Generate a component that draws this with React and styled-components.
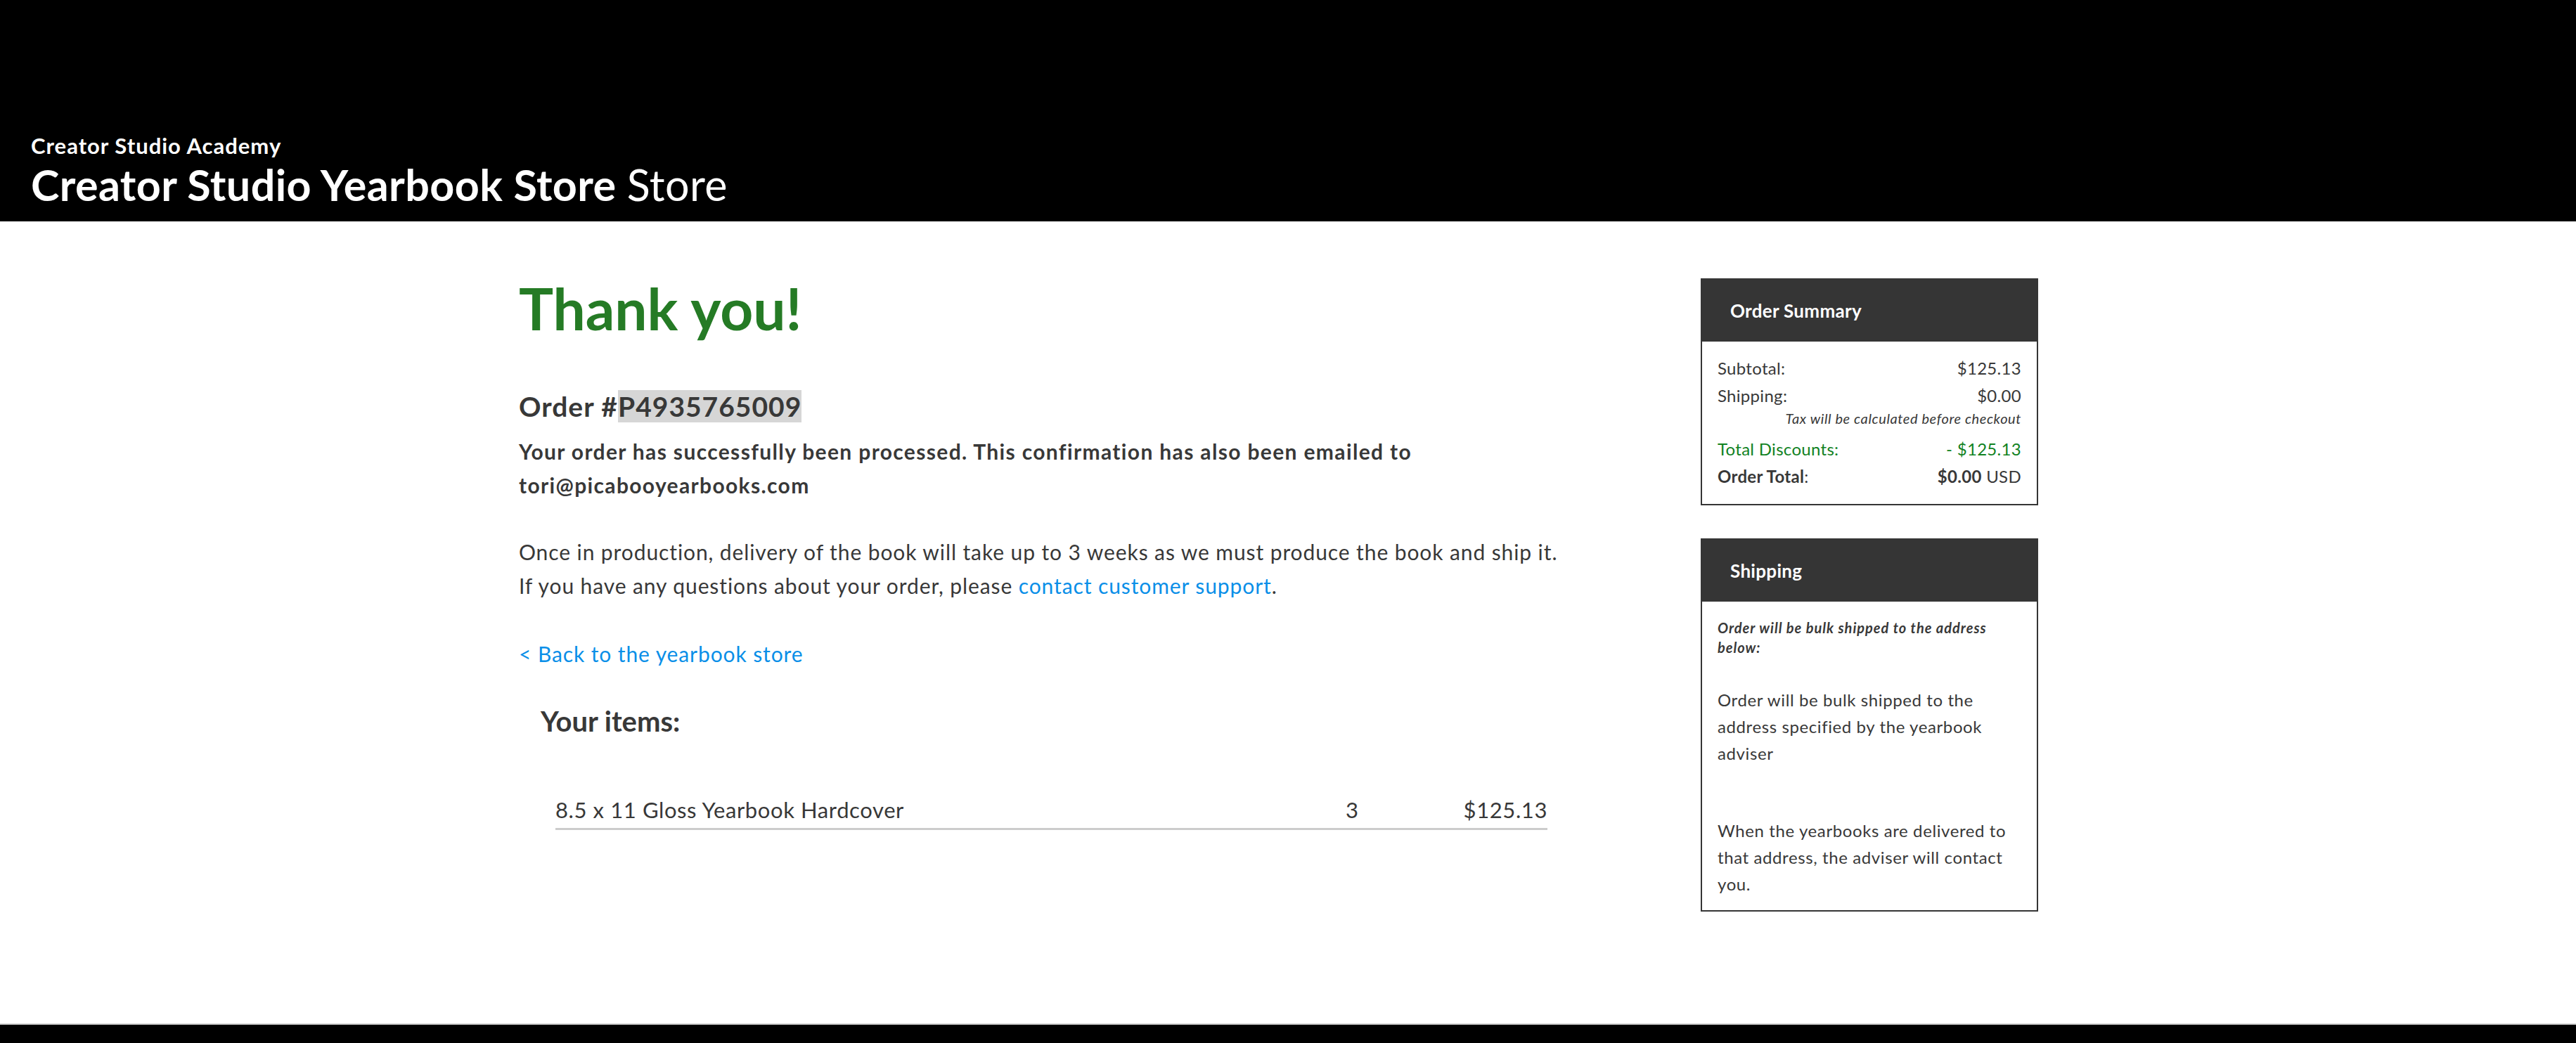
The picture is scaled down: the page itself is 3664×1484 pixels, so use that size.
import React from 'react'
import styled, {createGlobalStyle} from 'styled-components'

const GlobalStyle = createGlobalStyle`
  html, body {
    margin: 0;
    padding: 0;
    background: #ffffff;
    font-family: Lato, "Open Sans", sans-serif;
    color: #383838;
  }
`

const Page = styled.div`
  display: flex;
  flex-direction: column;
  min-height: 1484px;
`

const Header = styled.header`
  background: #000000;
  height: 315px;
  box-sizing: border-box;
  padding: 0 0 15px 44px;
  display: flex;
  flex-direction: column;
  justify-content: flex-end;
  color: #ffffff;
`

const SchoolName = styled.div`
  font-size: 31px;
  font-weight: 700;
  line-height: 38px;
  letter-spacing: 1px;
`

const StoreName = styled.h1`
  margin: 0;
  font-size: 61px;
  line-height: 74px;
  font-weight: 700;
  letter-spacing: 0.4px;
  span {
    font-weight: 400;
  }
`

const Body = styled.main`
  flex: 1;
  display: flex;
  justify-content: space-between;
  padding: 0 765px 0 738px;
`

const MainColumn = styled.section`
  width: 1480px;
  padding-top: 75px;
`

const Title = styled.h2`
  margin: 0;
  color: #257b25;
  font-size: 82px;
  line-height: 96px;
  font-weight: 700;
`

const OrderNumber = styled.h3`
  margin: 68px 0 0;
  font-size: 39px;
  line-height: 48px;
  font-weight: 700;
  letter-spacing: 1px;
  mark {
    background: #d6d6d6;
    color: inherit;
  }
`

const Lead = styled.p`
  margin: 16px 0 0;
  font-size: 30px;
  line-height: 48px;
  font-weight: 700;
  letter-spacing: 1.35px;
`

const Text = styled.p`
  margin: 47px 0 0;
  font-size: 30px;
  line-height: 48px;
  letter-spacing: 0.9px;
`

const Link = styled.a`
  color: #0a8fe8;
  text-decoration: none;
`

const BackLink = styled(Link)`
  display: block;
  margin-top: 49px;
  font-size: 30px;
  line-height: 48px;
  letter-spacing: 0.9px;
`

const ItemsTitle = styled.h3`
  margin: 48px 0 0 31px;
  font-size: 40px;
  line-height: 48px;
  font-weight: 700;
`

const ItemRow = styled.div`
  display: grid;
  grid-template-columns: 1124px 1fr auto;
  margin: 82px 0 0 52px;
  width: 1411px;
  padding-bottom: 6px;
  border-bottom: 3px solid #cccccc;
  font-size: 31px;
  line-height: 40px;
  letter-spacing: 0.6px;
`

const Qty = styled.span`
  text-align: left;
`

const Price = styled.span`
  text-align: right;
`

const Sidebar = styled.aside`
  width: 480px;
  padding-top: 81px;
  display: flex;
  flex-direction: column;
  gap: 47px;
`

const Panel = styled.div`
  border: 2px solid #353535;
`

const PanelHeader = styled.div`
  background: #353535;
  color: #ffffff;
  height: 88px;
  padding: 0 40px;
  display: flex;
  align-items: center;
  font-size: 26px;
  font-weight: 700;
  letter-spacing: 0.3px;
`

const PanelBody = styled.div`
  padding: ${p => p.$pad || '18px 22px 20px'};
`

const Row = styled.div`
  display: flex;
  justify-content: space-between;
  font-size: 24px;
  line-height: 39px;
  letter-spacing: 0.3px;
  color: ${p => p.$green ? '#11821f' : '#383838'};
  b {
    font-weight: 700;
  }
`

const Note = styled.div`
  text-align: right;
  font-size: 20px;
  font-style: italic;
  line-height: 26px;
  letter-spacing: 0.6px;
  margin-bottom: 11px;
`

const ShipNote = styled.div`
  font-size: 20px;
  font-style: italic;
  font-weight: 700;
  line-height: 28px;
  letter-spacing: 1px;
`

const ShipText = styled.p`
  margin: ${p => p.$top}px 0 0;
  font-size: 24px;
  line-height: 38px;
  letter-spacing: 0.6px;
`

const Footer = styled.footer`
  height: 26px;
  background: #000000;
  border-top: 2px solid #d4d4d4;
`

export default function App() {
  return (
    <Page>
      <GlobalStyle/>
      <Header>
        <SchoolName>Creator Studio Academy</SchoolName>
        <StoreName>Creator Studio Yearbook Store <span>Store</span></StoreName>
      </Header>
      <Body>
        <MainColumn>
          <Title>Thank you!</Title>
          <OrderNumber>Order #<mark>P4935765009</mark></OrderNumber>
          <Lead>
            Your order has successfully been processed. This confirmation has also been emailed to
            <br/>tori@picabooyearbooks.com
          </Lead>
          <Text>
            Once in production, delivery of the book will take up to 3 weeks as we must produce the book and ship it.
            <br/>If you have any questions about your order, please <Link href="#">contact customer support</Link>.
          </Text>
          <BackLink href="#">&lt; Back to the yearbook store</BackLink>
          <ItemsTitle>Your items:</ItemsTitle>
          <ItemRow>
            <span>8.5 x 11 Gloss Yearbook Hardcover</span>
            <Qty>3</Qty>
            <Price>$125.13</Price>
          </ItemRow>
        </MainColumn>
        <Sidebar>
          <Panel>
            <PanelHeader>Order Summary</PanelHeader>
            <PanelBody>
              <Row><span>Subtotal:</span><span>$125.13</span></Row>
              <Row><span>Shipping:</span><span>$0.00</span></Row>
              <Note>Tax will be calculated before checkout</Note>
              <Row $green><span>Total Discounts:</span><span>- $125.13</span></Row>
              <Row><span><b>Order Total</b>:</span><span><b>$0.00</b> USD</span></Row>
            </PanelBody>
          </Panel>
          <Panel>
            <PanelHeader>Shipping</PanelHeader>
            <PanelBody $pad="23px 22px 18px">
              <ShipNote>Order will be bulk shipped to the address below:</ShipNote>
              <ShipText $top={42}>Order will be bulk shipped to the address specified by the yearbook adviser</ShipText>
              <ShipText $top={72}>When the yearbooks are delivered to that address, the adviser will contact you.</ShipText>
            </PanelBody>
          </Panel>
        </Sidebar>
      </Body>
      <Footer/>
    </Page>
  )
}
